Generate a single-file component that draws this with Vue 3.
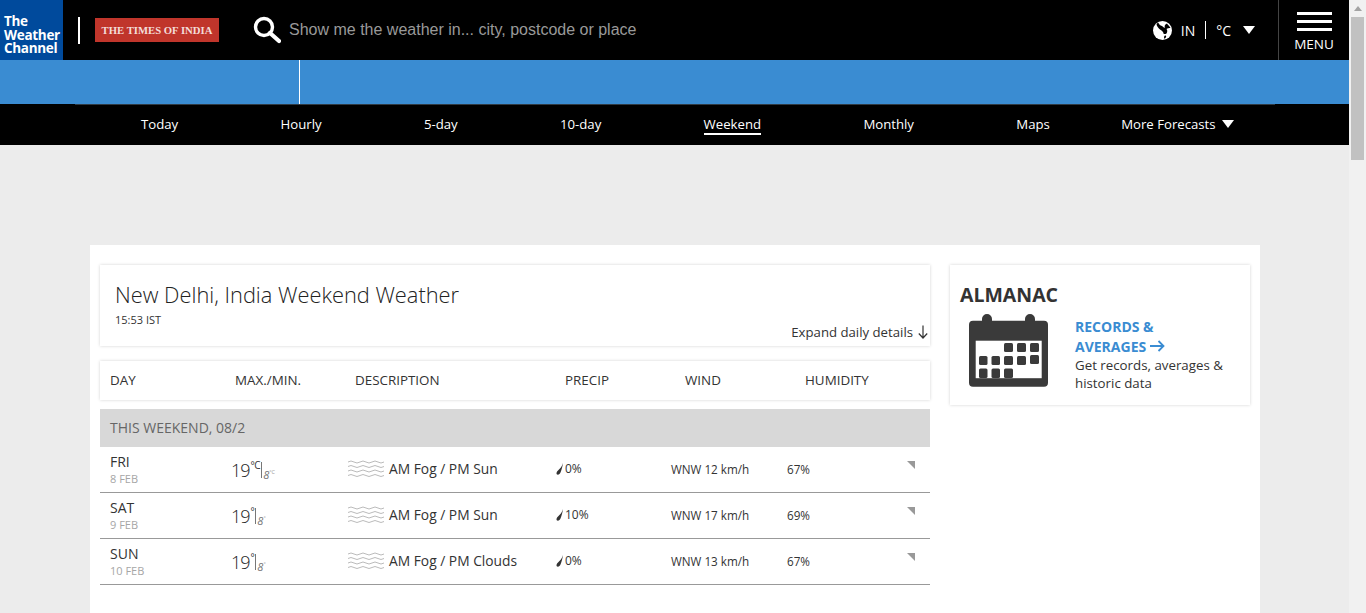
<script setup>
const navItems = ['Today', 'Hourly', '5-day', '10-day', 'Weekend', 'Monthly', 'Maps'];
const columns = ['DAY', 'MAX./MIN.', 'DESCRIPTION', 'PRECIP', 'WIND', 'HUMIDITY'];
const days = [
  { day: 'FRI', date: '8 FEB', unit: '°C', low: '°C', desc: 'AM Fog / PM Sun', precip: '0%', wind: 'WNW 12 km/h', humidity: '67%' },
  { day: 'SAT', date: '9 FEB', unit: '°', low: '°', desc: 'AM Fog / PM Sun', precip: '10%', wind: 'WNW 17 km/h', humidity: '69%' },
  { day: 'SUN', date: '10 FEB', unit: '°', low: '°', desc: 'AM Fog / PM Clouds', precip: '0%', wind: 'WNW 13 km/h', humidity: '67%' },
];
</script>

<template>
  <div class="page">
    <div class="main">
      <header class="top">
        <div class="logo">The<br />Weather<br />Channel</div>
        <div class="logo-sep"></div>
        <div class="toi">THE TIMES OF INDIA</div>
        <svg class="search-icon" width="28" height="28" viewBox="0 0 28 28">
          <circle cx="11" cy="11" r="8.5" fill="none" stroke="#fff" stroke-width="3.4" />
          <path d="M17 17l9 8" stroke="#fff" stroke-width="4.2" stroke-linecap="round" />
        </svg>
        <div class="search-text">Show me the weather in... city, postcode or place</div>
        <div class="locale">
          <svg class="globe" width="19" height="19" viewBox="0 0 19 19">
            <circle cx="9.5" cy="9.5" r="9.5" fill="#fff" />
            <path d="M5 1.5C6 3 7 4.500 9 5c1 1 2 2 3 1.500C11 5 12 3.500 14 2.500 15 4 17 5.500 17.500 7c-1.500 0-3 0-4 1 1 1 1 3 0 4.500-1 .5-2.500 1-3 0 0-2-2-3-3.500-4C5 7 4 5 3.500 3.500 4 2.500 4.500 2 5 1.500zM12 14.500c1 0 1.500.5 1 1.500-.5 1-1 1.500-2 1.500 0-1 0-2.500 1-3z" fill="#000" />
          </svg>
          <span class="loc-code">IN</span>
          <span class="loc-sep"></span>
          <span class="loc-unit">°C</span>
          <span class="tri"></span>
        </div>
        <div class="menu">
          <div class="burger"><i></i><i></i><i></i></div>
          <div class="menu-label">MENU</div>
        </div>
      </header>

      <div class="locbar"><div class="locbar-line"></div></div>

      <nav class="nav">
        <div class="nav-inner">
          <a v-for="item in navItems" :key="item" :class="{ active: item === 'Weekend' }">{{ item }}</a>
          <a class="more">More Forecasts <span class="tri"></span></a>
        </div>
      </nav>

      <div class="content">
        <div class="sheet">
          <section class="left">
            <div class="card title-card">
              <h1>New Delhi, India Weekend Weather</h1>
              <div class="time">15:53 IST</div>
              <div class="expand">Expand daily details
                <svg width="10" height="14" viewBox="0 0 10 14"><path d="M5 .5v12.500M.8 8.500L5 13l4.200-4.500" fill="none" stroke="#333" stroke-width="1.200" /></svg>
              </div>
            </div>

            <div class="card table-head">
              <span v-for="col in columns" :key="col">{{ col }}</span>
            </div>

            <div class="band">THIS WEEKEND, 08/2</div>

            <div v-for="row in days" :key="row.day" class="row">
              <div class="day">
                <div class="day-name">{{ row.day }}</div>
                <div class="day-date">{{ row.date }}</div>
              </div>
              <div class="temp">
                <span class="hi">19</span><span class="hi-unit">{{ row.unit }}</span><span class="temp-sep"></span><span class="lo">8</span><span class="lo-unit">{{ row.low }}</span>
              </div>
              <div class="desc">
                <svg width="36" height="18" viewBox="0 0 36 18">
                  <path v-for="y in [2, 6.500, 11, 15.500]" :key="y" :d="`M0 ${y}q3-2 6 0t6 0 6 0 6 0 6 0 6 0`" fill="none" stroke="#bbb" stroke-width="1" />
                </svg>
                <span>{{ row.desc }}</span>
              </div>
              <div class="precip">
                <svg width="8" height="12" viewBox="0 0 8 12"><path d="M7 0C6 3.500 4.500 5 2 7.500.5 9 0 10.500 1 11.500c1.500.5 3-.5 3.500-2C5.500 7 6.500 4 7 0z" fill="#333" /></svg>
                <span>{{ row.precip }}</span>
              </div>
              <div class="wind">{{ row.wind }}</div>
              <div class="humidity">{{ row.humidity }}</div>
              <div class="corner"></div>
            </div>
          </section>

          <aside class="card almanac">
            <h2>ALMANAC</h2>
            <div class="almanac-body">
              <svg class="calendar" width="79" height="73" viewBox="0 0 79 73">
                <path d="M4 6.700h9V5a5 5 0 0 1 10 0v1.700h33V5a5 5 0 0 1 10 0v1.700h9a4 4 0 0 1 4 4v58a4 4 0 0 1-4 4H4a4 4 0 0 1-4-4v-58a4 4 0 0 1 4-4z" fill="#3a3a3a" />
                <rect x="6.700" y="26.700" width="66" height="37.500" fill="#fff" />
                <g fill="#3a3a3a">
                  <rect x="35" y="29" width="9" height="9" rx="1.500" /><rect x="48" y="29" width="9" height="9" rx="1.500" /><rect x="61" y="29" width="9" height="9" rx="1.500" />
                  <rect x="10" y="42" width="8.500" height="9" rx="1.500" /><rect x="22.500" y="42" width="8.500" height="9" rx="1.500" /><rect x="35" y="42" width="9" height="9" rx="1.500" /><rect x="48" y="42" width="9" height="9" rx="1.500" /><rect x="61" y="41" width="9" height="9" rx="1.500" />
                  <rect x="10" y="54.500" width="8.500" height="9.500" rx="1.500" /><rect x="22.500" y="54.500" width="8.500" height="9.500" rx="1.500" /><rect x="35" y="54.500" width="9" height="9.500" rx="1.500" />
                </g>
              </svg>
              <div class="almanac-text">
                <a>RECORDS &amp;<br />AVERAGES
                  <svg width="15" height="12" viewBox="0 0 15 12"><path d="M0 6h13.500M8.500 1l5 5-5 5" fill="none" stroke="#3a8cd2" stroke-width="1.800" /></svg>
                </a>
                <p>Get records, averages &amp; historic data</p>
              </div>
            </div>
          </aside>
        </div>
      </div>
    </div>

    <div class="scrollbar">
      <div class="arrow"></div>
      <div class="thumb"></div>
    </div>
  </div>
</template>

<style>
html, body {
  margin: 0;
  height: 100%;
  overflow: hidden;
}
</style>

<style scoped>
.page {
  display: flex;
  height: 613px;
  overflow: hidden;
  font-family: "Open Sans", "Noto Sans", sans-serif;
  color: #333;
}
.main {
  width: 1349px;
  height: 613px;
  overflow: hidden;
  background: #ececec;
}

.top {
  display: flex;
  align-items: center;
  height: 60px;
  background: #000;
  color: #fff;
}
.logo {
  width: 63px;
  height: 60px;
  box-sizing: border-box;
  padding: 15px 0 0 4px;
  background: #004a9c;
  font-size: 13.500px;
  font-weight: 700;
  line-height: 13.500px;
  letter-spacing: -0.3px;
}
.logo-sep {
  width: 2px;
  height: 27px;
  margin-left: 15px;
  background: #fff;
}
.toi {
  width: 124px;
  height: 24px;
  margin-left: 15px;
  background: #c0352b;
  font-family: "Liberation Serif", serif;
  font-size: 10.700px;
  font-weight: 700;
  line-height: 24px;
  text-align: center;
  color: #f3dcd9;
}
.search-icon {
  margin-left: 34px;
}
.search-text {
  margin-left: 8px;
  font-family: "Liberation Sans", Arial, sans-serif;
  font-size: 16px;
  color: #999;
}
.locale {
  display: flex;
  align-items: center;
  margin-left: auto;
  font-size: 14px;
}
.loc-code {
  margin-left: 9px;
}
.loc-sep {
  width: 1px;
  height: 18px;
  margin: 0 10px;
  background: #fff;
}
.locale .tri {
  margin-left: 12px;
}
.tri {
  display: inline-block;
  border-left: 6.500px solid transparent;
  border-right: 6.500px solid transparent;
  border-top: 8px solid #fff;
}
.menu {
  width: 71px;
  height: 60px;
  box-sizing: border-box;
  margin-left: 23px;
  border-left: 1px solid #444;
  padding-top: 12px;
  text-align: center;
}
.burger {
  display: flex;
  flex-direction: column;
  gap: 5px;
  width: 35px;
  margin-left: 18px;
}
.burger i {
  height: 3px;
  background: #fff;
}
.menu-label {
  margin-top: 4px;
  font-size: 13.500px;
  line-height: 18px;
}

.locbar {
  height: 44px;
  background: #3a8cd2;
}
.locbar-line {
  width: 1px;
  height: 44px;
  margin-left: 299px;
  background: #fff;
}

.nav {
  height: 41px;
  background: #000;
}
.nav-inner {
  display: flex;
  gap: 102.300px;
  height: 40px;
  box-sizing: border-box;
  margin: 0 74px 0 75px;
  padding: 0 0 2px 66px;
  border-top: 1px solid #2f3a44;
  align-items: center;
}
.nav a {
  color: #fff;
  font-size: 13.200px;
  line-height: 18px;
}
.nav a.active {
  border-bottom: 2px solid #fff;
  margin-top: 2px;
}
.nav a.more {
  margin-left: -31px;
}
.nav .tri {
  margin-left: 3px;
  vertical-align: 1px;
}

.content {
  padding: 100px 89px 0 90px;
}
.sheet {
  display: flex;
  gap: 20px;
  height: 400px;
  padding: 20px 10px 0;
  background: #fff;
}
.left {
  width: 830px;
}
.card {
  background: #fff;
  box-shadow: 0 0 3px rgba(0, 0, 0, 0.18);
}
.title-card {
  position: relative;
  height: 81px;
  box-sizing: border-box;
  padding: 16px 15px 0;
}
h1 {
  margin: 0;
  font-size: 21.800px;
  font-weight: 300;
  line-height: 28px;
  color: #222;
}
.time {
  margin-top: 3px;
  font-size: 11px;
  line-height: 16px;
}
.expand {
  position: absolute;
  right: 2px;
  bottom: 5px;
  display: flex;
  align-items: center;
  gap: 5px;
  font-size: 13.200px;
}

.table-head {
  display: grid;
  grid-template-columns: 125px 120px 210px 120px 120px 1fr;
  align-items: center;
  height: 39px;
  box-sizing: border-box;
  margin-top: 15px;
  padding: 0 0 2px 10px;
  font-size: 13.400px;
}
.band {
  height: 38px;
  margin-top: 9px;
  padding-left: 10px;
  background: #d8d8d8;
  font-size: 14px;
  line-height: 38px;
  color: #666;
}
.row {
  display: grid;
  grid-template-columns: 122px 116px 208px 115px 116px 120px 1fr;
  align-items: center;
  height: 45px;
  padding-left: 10px;
  border-bottom: 1px solid #999;
}
.day-name {
  font-size: 14px;
  line-height: 16px;
}
.day-date {
  margin-top: 1px;
  font-size: 11px;
  line-height: 15px;
  color: #a6a6a6;
}
.temp {
  display: flex;
  align-items: flex-start;
  height: 28px;
}
.hi {
  margin-left: -1px;
  font-size: 18px;
  line-height: 28px;
  font-weight: 300;
  letter-spacing: -1px;
  color: #222;
}
.hi-unit {
  margin-left: 1px;
  font-size: 10px;
  line-height: 18px;
  letter-spacing: -0.5px;
}
.temp-sep {
  width: 1px;
  height: 16px;
  margin: 6.500px 1px 0 1px;
  background: #777;
}
.lo {
  font-size: 11px;
  font-style: italic;
  line-height: 37px;
  color: #777;
}
.lo-unit {
  font-size: 5.500px;
  line-height: 32px;
  color: #999;
}
.desc {
  display: flex;
  align-items: center;
  gap: 5px;
  margin-bottom: 2px;
  font-size: 13.800px;
}
.precip {
  display: flex;
  align-items: center;
  gap: 1px;
  margin-bottom: 2px;
  font-size: 12px;
}
.wind, .humidity {
  margin-bottom: 2px;
  font-size: 11.700px;
}
.corner {
  align-self: start;
  width: 0;
  height: 0;
  margin-top: 14px;
  border-top: 8px solid #999;
  border-left: 8px solid transparent;
}

.almanac {
  width: 300px;
  height: 140px;
  box-sizing: border-box;
  padding: 17px 10px 0;
}
h2 {
  margin: 0;
  font-size: 19.500px;
  font-weight: 700;
  line-height: 26px;
}
.almanac-body {
  display: flex;
  gap: 27px;
  margin-top: 6px;
  padding-left: 9px;
}
.calendar {
  flex-shrink: 0;
}
.almanac-text {
  margin-top: 3px;
  font-size: 13.300px;
  line-height: 18px;
}
.almanac-text a {
  color: #3a8cd2;
  font-size: 14px;
  font-weight: 700;
  line-height: 20px;
}
.almanac-text p {
  margin: -1.500px 0 0;
}

.scrollbar {
  width: 17px;
  height: 613px;
  background: #f1f1f1;
}
.arrow {
  width: 0;
  margin: 6px auto 6px;
  border-left: 4px solid transparent;
  border-right: 4px solid transparent;
  border-bottom: 5px solid #a3a3a3;
}
.thumb {
  width: 13px;
  height: 143px;
  margin-left: 2px;
  background: #c1c1c1;
}
</style>
